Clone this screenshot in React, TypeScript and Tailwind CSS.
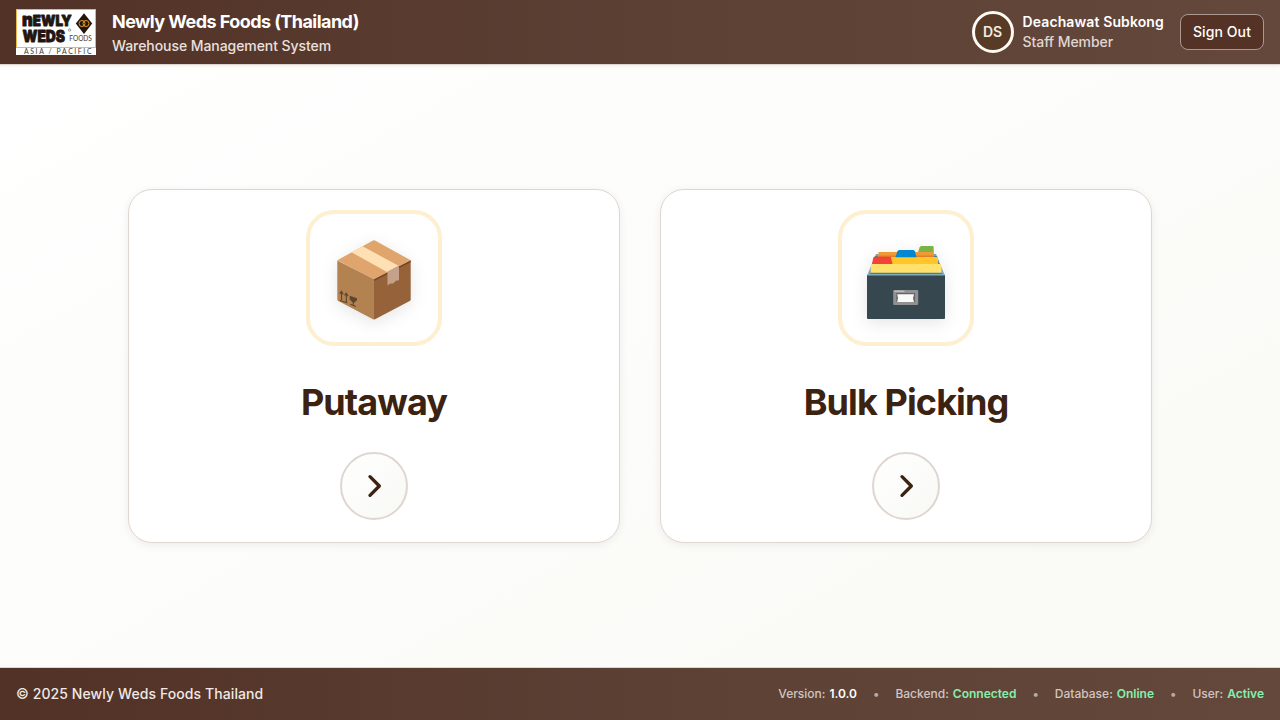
import type { ReactNode } from "react";

function Logo() {
  return (
    <svg width="80" height="46" viewBox="0 0 80 46" className="block shrink-0">
      <rect width="80" height="46" fill="#fff" />
      <rect x="0.5" y="0.5" width="79" height="38" fill="none" stroke="#efb84e" strokeWidth="1" />
      <g fill="#24140f" stroke="#24140f" strokeLinejoin="round" fontFamily="Inter, 'Liberation Sans', sans-serif" fontWeight="900">
        <text x="6" y="17.3" fontSize="14.8" strokeWidth="0.9" textLength="49.5" lengthAdjust="spacingAndGlyphs">
          <tspan fontSize="18.5">n</tspan>EWLY
        </text>
        <text x="6.5" y="32.6" fontSize="16" strokeWidth="0.9" textLength="42.5" lengthAdjust="spacingAndGlyphs">WEDS</text>
      </g>
      <circle cx="53.6" cy="21" r="1.2" fill="none" stroke="#665b57" strokeWidth="0.6" />
      <path d="M68 4.2 76.2 14.5 68 25 59.8 14.5Z" fill="#24140f" />
      <g fill="none" stroke="#d99c2a" strokeWidth="1">
        <circle cx="66" cy="14.5" r="3" />
        <circle cx="70" cy="14.5" r="3" />
      </g>
      <g fill="#403630" fontFamily="Lato, 'Liberation Sans', sans-serif">
        <text x="53.3" y="32.2" fontSize="6.6" textLength="22.5" lengthAdjust="spacingAndGlyphs">FOODS</text>
        <text x="8" y="45" fontSize="6.9" textLength="67.5" lengthAdjust="spacing">ASIA / PACIFIC</text>
      </g>
    </svg>
  );
}

function PackageIcon() {
  return (
    <svg width="80" height="80" viewBox="0 0 80 80" className="mt-1 drop-shadow-[0_4px_8px_rgba(0,0,0,0.1)]">
      <path d="M3.3 20.5 40 39v40.5a2 2 0 0 1-1-.3L4.3 61a2 2 0 0 1-1-1.6Z" fill="#b38251" />
      <path d="M76.7 20.5 40 39v40.5l1-.3L75.7 61a2 2 0 0 0 1-1.6Z" fill="#966239" />
      <path d="M40 39 76.7 20v2.2L40 41Z" fill="#74472a" />
      <path d="M3.3 20.2 39 .5a2 2 0 0 1 2 0l35.7 19.7L40 39.2Z" fill="#dfa56d" />
      <path d="M17.5 12.3 28.5 6.3 65 26 53.5 32.2Z" fill="#ffdfb4" />
      <path d="M53.5 31.5 65 25.5v14.7l-3 .6-3 2.8-2.8-.2-2.7 2Z" fill="#c5a08a" />
      <g fill="none" stroke="#60452e" strokeWidth="1.1">
        <path d="m5.8 60.5 7.5 2.3M7.5 60v-8.5M12.3 62v-8.5M5.8 53.6l1.7-2.3 1.8 3.2M10.4 55.4l1.9-2.3 1.8 3.2" />
        <path d="m16.3 64.3 5.6 2.2M19.3 65v-6.5" />
      </g>
      <path d="m15.6 55.8 7.5 2.4-.3 2.4-2.7 2.2-1.8-.6-2.5-3Z" fill="#60452e" />
    </svg>
  );
}

function FileBoxIcon() {
  return (
    <svg width="80" height="80" viewBox="0 0 80 80" className="mt-1 drop-shadow-[0_4px_8px_rgba(0,0,0,0.1)]">
      <path d="M10 14h60l9 22H1Z" fill="#78a4b5" />
      <path d="M9 16h62l5 18H4Z" fill="#547c8d" />
      <path d="M52 12.5 53.5 7.5Q54 6 55.5 6h10.8q1.4 0 1.4 1.4v5.5H52Z" fill="#7cb342" />
      <path d="M12.5 12h54q1.5 0 1.5 1.5V20H12Z" fill="#ef9a35" />
      <path d="M13 15.5h55V18H13Z" fill="#e47d28" />
      <path d="M25 17h46q1 0 1 1v8H25Z" fill="#ffc629" />
      <path d="M29.5 17.2 31.3 11.5Q31.8 10 33.3 10h13.9q1.4 0 1.8 1.5l1.5 5.7Z" fill="#0288d1" />
      <path d="M6 24 7.2 18q.3-1.3 1.7-1.3h14.5q1.3 0 1.7 1.4l1.3 5.5V25H6Z" fill="#f44336" />
      <path d="M6 24h68q1 0 1.1 1l.6 7.8H4.5L5 25q.1-1 1-1Z" fill="#ffe16c" />
      <path d="M1 35h78v43q0 1-1 1H2q-1 0-1-1Z" fill="#37474f" />
      <path d="M1 34.2h78V35.6H1Z" fill="#7fafc0" />
      <rect x="27.2" y="50" width="25" height="15" rx="1.2" fill="#919191" />
      <path d="M30.3 53h18.8v9H30.3Z" fill="#666" />
      <path d="M28.5 51.2h10" stroke="#d2d2d2" strokeWidth="1" />
      <path d="M31.2 54.3H48l-1 4 1 3.6H31.2l.8-3.8Z" fill="#fafafa" />
    </svg>
  );
}

function ActionCard({ title, children }: { title: string; children: ReactNode }) {
  return (
    <button className="flex h-[354px] flex-1 flex-col items-center rounded-3xl border border-[#e0d6d1] bg-white pt-5 shadow-[0_2px_8px_rgba(62,39,35,0.08)]">
      <span className="flex size-[136px] items-center justify-center rounded-[28px] border-4 border-[#fdefd0] bg-white">
        {children}
      </span>
      <span className="mt-8 text-4xl leading-12 font-bold tracking-[-0.025em] text-[#3c2210]">{title}</span>
      <span className="mt-[26px] flex size-[68px] items-center justify-center rounded-full border-2 border-[#dfd6d1] bg-gradient-to-br from-white to-[#f8f9f4] text-[#3c2210]">
        <svg width="32" height="32" viewBox="0 0 24 24" fill="none" stroke="currentColor" strokeWidth="2.5" strokeLinecap="round" strokeLinejoin="round">
          <path d="m9 5 7 7-7 7" />
        </svg>
      </span>
    </button>
  );
}

function Status({ label, value, ok = true }: { label: string; value: string; ok?: boolean }) {
  return (
    <span className="flex gap-1 text-[#d0c5c0]">
      {label}:
      <span className={ok ? "font-semibold text-[#86efac]" : "font-semibold text-white"}>{value}</span>
    </span>
  );
}

export default function App() {
  return (
    <div className="flex h-screen flex-col bg-gradient-to-br from-white to-[#f9faf5] font-['Inter',sans-serif] antialiased">
      <header className="flex h-[65px] shrink-0 items-center justify-between border-b border-[#e0d6d1] bg-gradient-to-r from-[#523126] via-[#5c4034] to-[#65483c] px-4 shadow-[0_1px_3px_rgba(62,39,35,0.08)]">
        <div className="flex items-center gap-4">
          <Logo />
          <div className="pt-0.5">
            <h1 className="text-lg leading-[25px] font-bold tracking-[-0.56px] text-white">Newly Weds Foods (Thailand)</h1>
            <p className="text-sm leading-[23px] font-medium tracking-[-0.07px] text-[#e9e1dd]">Warehouse Management System</p>
          </div>
        </div>
        <div className="flex items-center">
          <div className="flex size-[42px] items-center justify-center rounded-full border-3 border-[#fffaf2] bg-[#583b26] text-sm font-semibold text-[#f5ede3]">DS</div>
          <div className="ml-[9px] text-sm leading-5">
            <div className="font-semibold tracking-[0.11px] text-white">Deachawat Subkong</div>
            <div className="font-medium tracking-[-0.07px] text-[#e0d6d1]">Staff Member</div>
          </div>
          <button className="ml-4 h-9 rounded-lg border border-[#aa9991] bg-[#543226] px-3 text-sm font-medium tracking-[0.1px] text-white">Sign Out</button>
        </div>
      </header>
      <main className="flex flex-1 items-center px-32">
        <div className="flex w-full gap-10">
          <ActionCard title="Putaway"><PackageIcon /></ActionCard>
          <ActionCard title="Bulk Picking"><FileBoxIcon /></ActionCard>
        </div>
      </main>
      <footer className="flex h-[53px] shrink-0 items-center justify-between border-t border-[#e0d6d1] bg-gradient-to-r from-[#523126] via-[#5c4034] to-[#65483c] px-4">
        <span className="text-sm font-medium tracking-[0.09px] text-[#f0e9e5]">© 2025 Newly Weds Foods Thailand</span>
        <div className="flex items-center gap-4 text-xs font-medium">
          <Status label="Version" value="1.0.0" ok={false} />
          <span className="text-[#b9aaa3]">•</span>
          <Status label="Backend" value="Connected" />
          <span className="text-[#b9aaa3]">•</span>
          <Status label="Database" value="Online" />
          <span className="text-[#b9aaa3]">•</span>
          <Status label="User" value="Active" />
        </div>
      </footer>
    </div>
  );
}
